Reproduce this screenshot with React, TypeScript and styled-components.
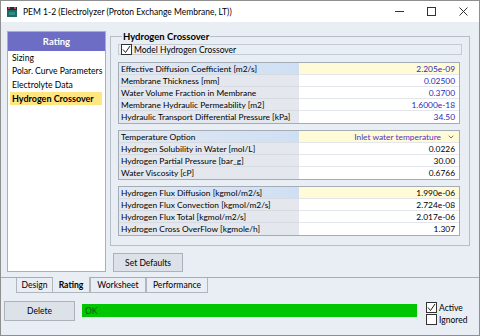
import React from 'react';
import styled, { createGlobalStyle } from 'styled-components';
import { ChevronDown } from 'lucide-react';

const Global = createGlobalStyle`
  html, body { margin: 0; padding: 0; }
  body { width: 480px; height: 336px; overflow: hidden; font-family: Lato, "Noto Sans", sans-serif; }
  * { box-sizing: border-box; }
`;

const Window = styled.div`
  width: 480px;
  height: 336px;
  border: 1px solid #8f8f8f;
  background: #e9eef5;
  display: flex;
  flex-direction: column;
  font-size: 8.5px;
  color: #000;
`;

const TitleBar = styled.div`
  height: 21px;
  background: #fff;
  display: flex;
  align-items: center;
  padding-left: 5px;
  gap: 5px;
  font-size: 8.5px;
  color: #000;
`;

const TitleText = styled.span`
  flex: 1;
  white-space: nowrap;
`;

const Controls = styled.div`
  display: flex;
  align-items: center;
  height: 100%;
`;

const CtrlBtn = styled.div`
  width: 32px;
  height: 100%;
  display: flex;
  align-items: center;
  justify-content: center;
`;

const Body = styled.div`
  flex: 1;
  display: flex;
  flex-direction: column;
  padding: 9px 0 0 0;
`;

const Main = styled.div`
  display: flex;
  gap: 4px;
  padding-left: 6px;
  height: 241px;
`;

const LeftPanel = styled.div`
  width: 99px;
  height: 100%;
  background: #fff;
  border: 1px solid #a9b0ba;
`;

const PanelHeader = styled.div`
  height: 19px;
  background: #6d6dc6;
  color: #fff;
  font-weight: bold;
  font-size: 9.5px;
  display: flex;
  align-items: center;
  justify-content: center;
`;

const NavItem = styled.div<{ $active?: boolean }>`
  height: 13.5px;
  margin: 0 3px 0 2px;
  padding-left: 2px;
  display: flex;
  align-items: center;
  white-space: nowrap;
  font-size: ${p => (p.$active ? '9px' : '8.6px')};
  background: ${p => (p.$active ? '#ffe680' : 'transparent')};
  font-weight: ${p => (p.$active ? 'bold' : 'normal')};
`;

const RightCol = styled.div`
  width: 360px;
  display: flex;
  flex-direction: column;
  align-items: flex-start;
`;

const Group = styled.fieldset`
  width: 360px;
  height: 215px;
  margin: 0;
  border: 1px solid #b7bec8;
  padding: 2px 7px 0 7px;
  display: flex;
  flex-direction: column;
  gap: 6px;
`;

const Legend = styled.legend`
  font-weight: bold;
  font-size: 9.5px;
  padding: 0 1px;
  margin-left: 4px;
  line-height: 11px;
`;

const CheckRow = styled.div`
  width: 344px;
  height: 11px;
  border: 1px solid #c5cbd3;
  display: flex;
  align-items: center;
  gap: 2px;
  padding-left: 2px;
  font-size: 8.5px;
  margin-bottom: 1px;
`;

const Box = styled.span`
  width: 11px;
  height: 11px;
  border: 1px solid #333;
  background: #fff;
  display: inline-flex;
  align-items: center;
  justify-content: center;
  flex: none;
`;

const Table = styled.div`
  width: 342px;
  border: 1px solid #a4acb6;
  display: grid;
  grid-template-columns: 180px 1fr;
  grid-auto-rows: 12px;
  background: #fff;
`;

const Label = styled.div<{ $sel?: boolean }>`
  background: ${p => (p.$sel ? 'linear-gradient(to right, #e2e9f3, #cfdff3)' : '#e4e8ee')};
  border-bottom: 1px solid #d6dbe2;
  padding-left: 2px;
  display: flex;
  align-items: center;
  white-space: nowrap;
  overflow: hidden;
  font-size: 8.4px;
  &:nth-last-child(2) { border-bottom: none; }
`;

const Value = styled.div<{ $sel?: boolean; $color?: string }>`
  background: ${p => (p.$sel ? '#fffbd7' : '#fff')};
  border-bottom: 1px solid #e3e6eb;
  color: ${p => p.$color || '#000'};
  padding-right: 4px;
  display: flex;
  align-items: center;
  justify-content: flex-end;
  gap: 6px;
  white-space: nowrap;
  font-size: 8.4px;
  &:last-child { border-bottom: none; }
`;

const Button = styled.div<{ $w: number; $h: number }>`
  width: ${p => p.$w}px;
  height: ${p => p.$h}px;
  background: #dde2e9;
  border: 1px solid #acb2ba;
  display: flex;
  align-items: center;
  justify-content: center;
  font-size: 8.5px;
`;

const DefaultsWrap = styled.div`
  margin: 7px 0 0 3px;
`;

const TabStrip = styled.div`
  margin-top: 5px;
  border-top: 1px solid #a7adb5;
  display: flex;
  padding-left: 15px;
`;

const Tab = styled.div<{ $active?: boolean; $w: number }>`
  width: ${p => p.$w}px;
  border: 1px solid #b0b6be;
  border-top: none;
  border-left: ${p => (p.$active ? 'none' : '1px solid #b0b6be')};
  margin-top: ${p => (p.$active ? '-1px' : '0')};
  height: ${p => (p.$active ? '16px' : '15px')};
  background: #e9eef5;
  font-weight: ${p => (p.$active ? 'bold' : 'normal')};
  display: flex;
  align-items: center;
  justify-content: center;
  font-size: 8.6px;
`;

const BottomBar = styled.div`
  display: flex;
  align-items: flex-start;
  padding: 8px 0 0 3px;
`;

const StatusBar = styled.div`
  width: 335px;
  height: 13px;
  margin: 3px 0 0 7px;
  background: #00c600;
  color: #0b5a0b;
  font-size: 8.5px;
  display: flex;
  align-items: center;
  padding-left: 3px;
`;

const Checks = styled.div`
  margin: 1px 0 0 9px;
  display: flex;
  flex-direction: column;
  gap: 1px;
`;

const CheckItem = styled.div`
  display: flex;
  align-items: center;
  gap: 2px;
  font-size: 8.5px;
  height: 11px;
`;

const Tick = () => (
  <svg width="9" height="9" viewBox="0 0 9 9">
    <path d="M1 4.5 L3.5 7.5 L8 1" fill="none" stroke="#222" strokeWidth="1" />
  </svg>
);

const AppIcon = () => (
  <svg width="12" height="12" viewBox="0 0 12 12">
    <rect x="1" y="1" width="10" height="3" fill="#2b2b2b" />
    <rect x="2" y="1" width="2" height="2" fill="#d04070" />
    <rect x="8" y="1" width="2" height="2" fill="#d04070" />
    <rect x="1" y="4" width="10" height="7" fill="#1d6b66" />
    <rect x="3" y="6" width="6" height="3" fill="#2f8c86" />
  </svg>
);

type Row = { label: string; value: string; sel?: boolean; color?: string; dropdown?: boolean };

const t1: Row[] = [
  { label: 'Effective Diffusion Coefficient [m2/s]', value: '2.205e-09', sel: true, color: '#2a2ab8' },
  { label: 'Membrane Thickness [mm]', value: '0.02500', color: '#2a2ab8' },
  { label: 'Water Volume Fraction in Membrane', value: '0.3700', color: '#2a2ab8' },
  { label: 'Membrane Hydraulic Permeability [m2]', value: '1.6000e-18', color: '#2a2ab8' },
  { label: 'Hydraulic Transport Differential Pressure [kPa]', value: '34.50', color: '#2a2ab8' },
];

const t2: Row[] = [
  { label: 'Temperature Option', value: 'Inlet water temperature', sel: true, color: '#5530c8', dropdown: true },
  { label: 'Hydrogen Solubility in Water [mol/L]', value: '0.0226' },
  { label: 'Hydrogen Partial Pressure [bar_g]', value: '30.00' },
  { label: 'Water Viscosity [cP]', value: '0.6766' },
];

const t3: Row[] = [
  { label: 'Hydrogen Flux Diffusion [kgmol/m2/s]', value: '1.990e-06', sel: true },
  { label: 'Hydrogen Flux Convection [kgmol/m2/s]', value: '2.724e-08' },
  { label: 'Hydrogen Flux Total [kgmol/m2/s]', value: '2.017e-06' },
  { label: 'Hydrogen Cross OverFlow [kgmole/h]', value: '1.307' },
];

const DataTable = ({ rows }: { rows: Row[] }) => (
  <Table>
    {rows.map(r => (
      <React.Fragment key={r.label}>
        <Label $sel={r.sel}>{r.label}</Label>
        <Value $sel={r.sel} $color={r.color}>
          {r.value}
          {r.dropdown && <ChevronDown size={8} color="#444" strokeWidth={2.2} />}
        </Value>
      </React.Fragment>
    ))}
  </Table>
);

export default function App() {
  return (
    <>
      <Global />
      <Window>
        <TitleBar>
          <AppIcon />
          <TitleText>PEM 1-2 (Electrolyzer (Proton Exchange Membrane, LT))</TitleText>
          <Controls>
            <CtrlBtn>
              <svg width="9" height="9" viewBox="0 0 9 9"><path d="M0 4.5 H9" stroke="#333" strokeWidth="1" /></svg>
            </CtrlBtn>
            <CtrlBtn>
              <svg width="9" height="9" viewBox="0 0 9 9"><rect x="0.5" y="0.5" width="8" height="8" fill="none" stroke="#333" strokeWidth="1" /></svg>
            </CtrlBtn>
            <CtrlBtn>
              <svg width="9" height="9" viewBox="0 0 9 9"><path d="M0.5 0.5 L8.5 8.5 M8.5 0.5 L0.5 8.5" stroke="#333" strokeWidth="1" /></svg>
            </CtrlBtn>
          </Controls>
        </TitleBar>
        <Body>
          <Main>
            <LeftPanel>
              <PanelHeader>Rating</PanelHeader>
              <NavItem>Sizing</NavItem>
              <NavItem>Polar. Curve Parameters</NavItem>
              <NavItem>Electrolyte Data</NavItem>
              <NavItem $active>Hydrogen Crossover</NavItem>
            </LeftPanel>
            <RightCol>
              <Group>
                <Legend>Hydrogen Crossover</Legend>
                <CheckRow>
                  <Box><Tick /></Box>
                  Model Hydrogen Crossover
                </CheckRow>
                <DataTable rows={t1} />
                <DataTable rows={t2} />
                <DataTable rows={t3} />
              </Group>
              <DefaultsWrap>
                <Button $w={70} $h={19}>Set Defaults</Button>
              </DefaultsWrap>
            </RightCol>
          </Main>
          <TabStrip>
            <Tab $w={37}>Design</Tab>
            <Tab $w={37} $active>Rating</Tab>
            <Tab $w={56}>Worksheet</Tab>
            <Tab $w={62}>Performance</Tab>
          </TabStrip>
          <BottomBar>
            <Button $w={71} $h={20}>Delete</Button>
            <StatusBar>OK</StatusBar>
            <Checks>
              <CheckItem><Box><Tick /></Box>Active</CheckItem>
              <CheckItem><Box />Ignored</CheckItem>
            </Checks>
          </BottomBar>
        </Body>
      </Window>
    </>
  );
}
